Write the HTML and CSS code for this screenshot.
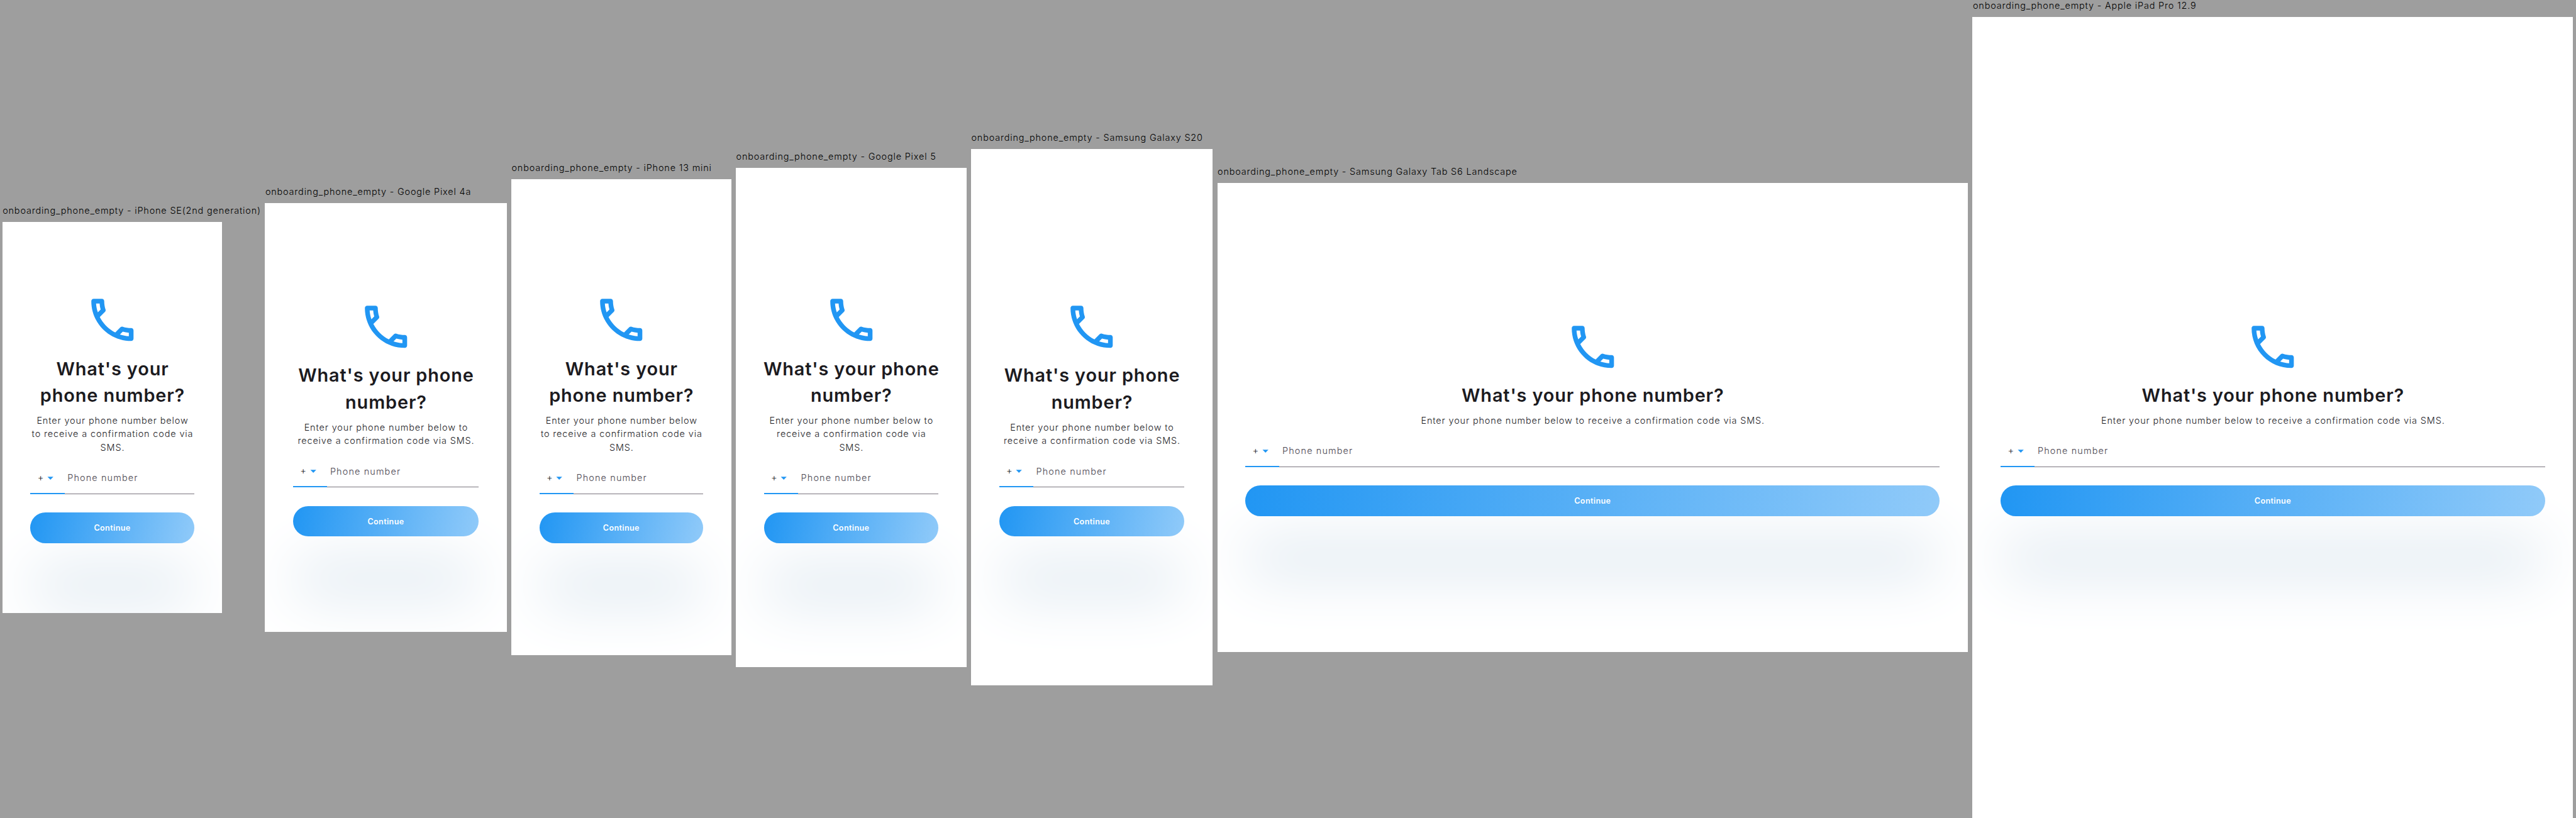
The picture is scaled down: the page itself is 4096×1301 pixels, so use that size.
FILE: index.html
```
<!DOCTYPE html>
<html lang="en">
<head>
<meta charset="utf-8">
<title>onboarding_phone_empty</title>
<link rel="stylesheet" href="styles.css">
</head>
<body>
<svg class="defs" aria-hidden="true">
  <symbol id="phone" viewBox="0 0 24 24"><path d="M6.54 5c.06.89.21 1.76.45 2.59l-1.2 1.2c-.41-1.2-.67-2.47-.76-3.79h1.51m9.86 12.02c.85.24 1.72.39 2.6.45v1.49c-1.32-.09-2.59-.35-3.8-.75l1.2-1.19M7.5 3H4c-.55 0-1 .45-1 1 0 9.39 7.61 17 17 17 .55 0 1-.45 1-1v-3.49c0-.55-.45-1-1-1-1.24 0-2.45-.2-3.57-.57-.1-.04-.21-.05-.31-.05-.26 0-.51.1-.71.29l-2.2 2.2c-2.83-1.45-5.15-3.76-6.59-6.59l2.2-2.2c.28-.28.36-.67.25-1.02C8.7 6.45 8.5 5.25 8.5 4c0-.55-.45-1-1-1z"/></symbol>
  <symbol id="drop" viewBox="0 0 24 24"><path d="M7 10l5 5 5-5z"/></symbol>
</svg>
<main class="board">

  <section class="device device--se">
    <h2 class="label">onboarding_phone_empty - iPhone SE(2nd generation)</h2>
    <div class="screen">
      <svg class="hero"><use href="#phone"/></svg>
      <h1 class="title">What's your<br>phone number?</h1>
      <p class="text">Enter your phone number below<br>to receive a confirmation code via<br>SMS.</p>
      <div class="field">
        <div class="code"><span class="plus">+</span><svg class="arrow"><use href="#drop"/></svg></div>
        <div class="hint">Phone number</div>
      </div>
      <div class="button">Continue</div>
    </div>
  </section>

  <section class="device device--pixel4a">
    <h2 class="label">onboarding_phone_empty - Google Pixel 4a</h2>
    <div class="screen">
      <svg class="hero"><use href="#phone"/></svg>
      <h1 class="title">What's your phone<br>number?</h1>
      <p class="text">Enter your phone number below to<br>receive a confirmation code via SMS.</p>
      <div class="field">
        <div class="code"><span class="plus">+</span><svg class="arrow"><use href="#drop"/></svg></div>
        <div class="hint">Phone number</div>
      </div>
      <div class="button">Continue</div>
    </div>
  </section>

  <section class="device device--mini">
    <h2 class="label">onboarding_phone_empty - iPhone 13 mini</h2>
    <div class="screen">
      <svg class="hero"><use href="#phone"/></svg>
      <h1 class="title">What's your<br>phone number?</h1>
      <p class="text">Enter your phone number below<br>to receive a confirmation code via<br>SMS.</p>
      <div class="field">
        <div class="code"><span class="plus">+</span><svg class="arrow"><use href="#drop"/></svg></div>
        <div class="hint">Phone number</div>
      </div>
      <div class="button">Continue</div>
    </div>
  </section>

  <section class="device device--pixel5">
    <h2 class="label">onboarding_phone_empty - Google Pixel 5</h2>
    <div class="screen">
      <svg class="hero"><use href="#phone"/></svg>
      <h1 class="title">What's your phone<br>number?</h1>
      <p class="text">Enter your phone number below to<br>receive a confirmation code via<br>SMS.</p>
      <div class="field">
        <div class="code"><span class="plus">+</span><svg class="arrow"><use href="#drop"/></svg></div>
        <div class="hint">Phone number</div>
      </div>
      <div class="button">Continue</div>
    </div>
  </section>

  <section class="device device--s20">
    <h2 class="label">onboarding_phone_empty - Samsung Galaxy S20</h2>
    <div class="screen">
      <svg class="hero"><use href="#phone"/></svg>
      <h1 class="title">What's your phone<br>number?</h1>
      <p class="text">Enter your phone number below to<br>receive a confirmation code via SMS.</p>
      <div class="field">
        <div class="code"><span class="plus">+</span><svg class="arrow"><use href="#drop"/></svg></div>
        <div class="hint">Phone number</div>
      </div>
      <div class="button">Continue</div>
    </div>
  </section>

  <section class="device device--tab">
    <h2 class="label">onboarding_phone_empty - Samsung Galaxy Tab S6 Landscape</h2>
    <div class="screen">
      <svg class="hero"><use href="#phone"/></svg>
      <h1 class="title">What's your phone number?</h1>
      <p class="text">Enter your phone number below to receive a confirmation code via SMS.</p>
      <div class="field">
        <div class="code"><span class="plus">+</span><svg class="arrow"><use href="#drop"/></svg></div>
        <div class="hint">Phone number</div>
      </div>
      <div class="button">Continue</div>
    </div>
  </section>

  <section class="device device--ipad">
    <h2 class="label">onboarding_phone_empty - Apple iPad Pro 12.9</h2>
    <div class="screen">
      <svg class="hero"><use href="#phone"/></svg>
      <h1 class="title">What's your phone number?</h1>
      <p class="text">Enter your phone number below to receive a confirmation code via SMS.</p>
      <div class="field">
        <div class="code"><span class="plus">+</span><svg class="arrow"><use href="#drop"/></svg></div>
        <div class="hint">Phone number</div>
      </div>
      <div class="button">Continue</div>
    </div>
  </section>

</main>
</body>
</html>
```
FILE: styles.css
```
html,
body {
  margin: 0;
  height: 100%;
  overflow: hidden;
  background: #9e9e9e;
}

.defs {
  display: none;
}

.board {
  zoom: 0.93239;
  box-sizing: border-box;
  width: 4393px;
  height: 1395px;
  padding: 0 4px;
  display: flex;
  align-items: center;
  gap: 8px;
  font-family: Inter, "Liberation Sans", sans-serif;
  font-weight: 350;
  color: #1c1b1f;
}

.device {
  flex: none;
  width: var(--w);
}

.device--se { --w: 375px; --h: 667px; --tilt: 100.6deg; width: 440px; }
.device--pixel4a { --w: 412px; --h: 732px; --tilt: 99.3deg; }
.device--mini { --w: 375px; --h: 812px; --tilt: 100.6deg; }
.device--pixel5 { --w: 393px; --h: 851px; --tilt: 99.9deg; }
.device--s20 { --w: 412px; --h: 915px; --tilt: 99.3deg; }
.device--tab { --w: 1280px; --h: 800px; --tilt: 92.5deg; }
.device--ipad { --w: 1024px; --h: 1366px; --tilt: 93.2deg; }

.label {
  box-sizing: border-box;
  margin: 0;
  height: 29px;
  padding-left: 0.5px;
  font-size: 15.5px;
  font-weight: 350;
  line-height: 20px;
  letter-spacing: 0.88px;
  white-space: nowrap;
  color: #000;
}

.screen {
  box-sizing: border-box;
  width: var(--w);
  height: var(--h);
  padding: 0 48px;
  display: flex;
  flex-direction: column;
  justify-content: center;
  overflow: hidden;
  background: #fff;
}

.hero {
  flex: none;
  align-self: center;
  width: 96px;
  height: 96px;
  fill: #2196f3;
}

.title {
  margin: 13px -10px 0;
  padding-left: 1px;
  font-size: 31px;
  font-weight: 600;
  line-height: 46px;
  letter-spacing: 0.93px;
  text-align: center;
  white-space: nowrap;
}

.text {
  margin: 7px -10px 0;
  padding-left: 1px;
  font-size: 15.5px;
  line-height: 23px;
  letter-spacing: 0.93px;
  text-align: center;
  white-space: nowrap;
}

.field {
  flex: none;
  height: 68px;
  display: flex;
  align-items: stretch;
}

.code {
  box-sizing: border-box;
  width: 58px;
  padding: 16px 0 0 12px;
  display: flex;
  align-items: center;
  border-bottom: 2.2px solid #2196f3;
}

.plus {
  width: 10px;
  font-size: 16px;
  font-weight: 300;
  line-height: 20px;
  text-align: center;
}

.arrow {
  width: 24px;
  height: 24px;
  fill: #2196f3;
}

.hint {
  box-sizing: border-box;
  flex: 1;
  padding: 26px 0 0 5px;
  border-bottom: 1.1px solid #79747e;
  font-size: 15.5px;
  line-height: 30px;
  letter-spacing: 1.2px;
  color: #49454f;
}

.button {
  flex: none;
  height: 52px;
  margin-top: 32px;
  border-radius: 26px;
  background: linear-gradient(var(--tilt), #2196f3, #90caf9);
  box-shadow: 0 98px 100px #d7e3ed;
  font-size: 13.5px;
  font-weight: 600;
  line-height: 54px;
  letter-spacing: 0.4px;
  text-align: center;
  color: #fff;
}
```
